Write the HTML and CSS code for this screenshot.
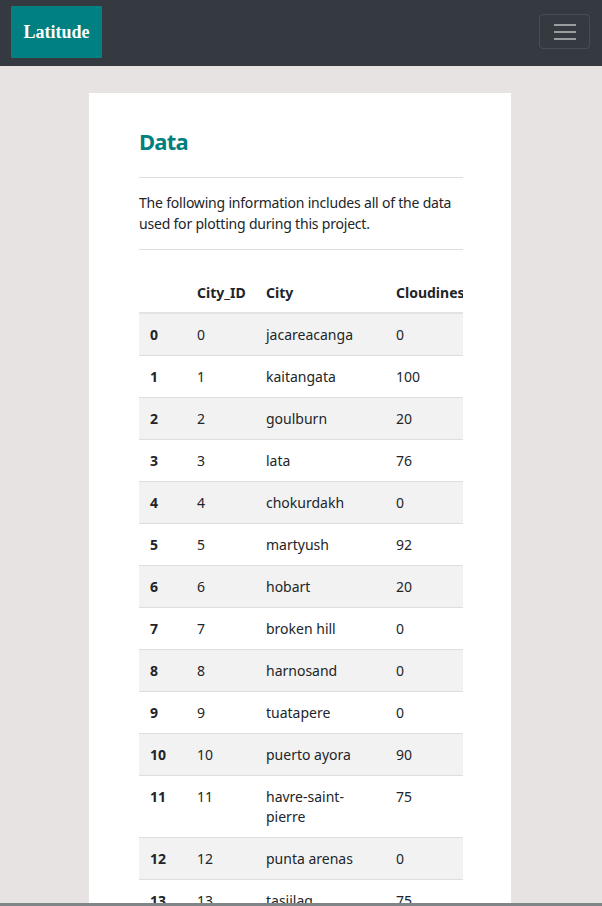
FILE: index.html
```html
<!DOCTYPE html>
<html>
<head>
<meta charset="utf-8">
<link rel="stylesheet" href="styles.css">
</head>
<body>
<nav class="navbar">
  <a class="brand" href="#">Latitude</a>
  <button class="toggler" type="button" aria-label="Toggle navigation">
    <span class="bar"></span><span class="bar"></span><span class="bar"></span>
  </button>
</nav>
<main class="main">
  <section class="card">
    <h1 class="title">Data</h1>
    <hr class="rule">
    <p class="lead">The following information includes all of the data used for plotting during this project.</p>
    <hr class="rule">
    <div class="table-wrap">
      <table class="data">
        <colgroup>
          <col class="c-idx"><col class="c-id"><col class="c-city"><col class="c-cloud"><col class="c-more"><col class="c-more"><col class="c-more">
        </colgroup>
        <thead>
          <tr><th></th><th>City_ID</th><th>City</th><th>Cloudiness</th><th>Country</th><th>Date</th><th>Humidity</th></tr>
        </thead>
        <tbody>
          <tr><th>0</th><td>0</td><td>jacareacanga</td><td>0</td><td>BR</td><td>1564184599</td><td>62</td></tr>
          <tr><th>1</th><td>1</td><td>kaitangata</td><td>100</td><td>NZ</td><td>1564184600</td><td>94</td></tr>
          <tr><th>2</th><td>2</td><td>goulburn</td><td>20</td><td>AU</td><td>1564184600</td><td>63</td></tr>
          <tr><th>3</th><td>3</td><td>lata</td><td>76</td><td>IN</td><td>1564184600</td><td>93</td></tr>
          <tr><th>4</th><td>4</td><td>chokurdakh</td><td>0</td><td>RU</td><td>1564184601</td><td>72</td></tr>
          <tr><th>5</th><td>5</td><td>martyush</td><td>92</td><td>RU</td><td>1564184601</td><td>81</td></tr>
          <tr><th>6</th><td>6</td><td>hobart</td><td>20</td><td>AU</td><td>1564184602</td><td>76</td></tr>
          <tr><th>7</th><td>7</td><td>broken hill</td><td>0</td><td>AU</td><td>1564184602</td><td>42</td></tr>
          <tr><th>8</th><td>8</td><td>harnosand</td><td>0</td><td>SE</td><td>1564184602</td><td>67</td></tr>
          <tr><th>9</th><td>9</td><td>tuatapere</td><td>0</td><td>NZ</td><td>1564184603</td><td>90</td></tr>
          <tr><th>10</th><td>10</td><td>puerto ayora</td><td>90</td><td>EC</td><td>1564184603</td><td>82</td></tr>
          <tr><th>11</th><td>11</td><td>havre-saint-pierre</td><td>75</td><td>CA</td><td>1564184604</td><td>71</td></tr>
          <tr><th>12</th><td>12</td><td>punta arenas</td><td>0</td><td>CL</td><td>1564184604</td><td>86</td></tr>
          <tr><th>13</th><td>13</td><td>tasiilaq</td><td>75</td><td>GL</td><td>1564184605</td><td>80</td></tr>
          <tr><th>14</th><td>14</td><td>rikitea</td><td>0</td><td>PF</td><td>1564184605</td><td>73</td></tr>
        </tbody>
      </table>
    </div>
  </section>
</main>
<div class="hscroll"></div>
</body>
</html>
```

FILE: styles.css
```css
* { box-sizing: border-box; }

html, body {
  margin: 0;
  padding: 0;
}

body {
  background: #e7e3e2;
  font-family: "Noto Sans", "Open Sans", sans-serif;
  font-size: 14px;
  line-height: 21px;
  color: #212529;
  height: 906px;
  overflow: hidden;
}

.navbar {
  display: flex;
  align-items: center;
  justify-content: space-between;
  height: 66px;
  padding: 0 12px 0 11px;
  background: #343a40;
}

.brand {
  display: flex;
  align-items: center;
  justify-content: center;
  width: 91px;
  height: 52px;
  margin-top: -2px;
  background: #008080;
  color: #fff;
  text-decoration: none;
  font-family: "Liberation Serif", "DejaVu Serif", serif;
  font-weight: bold;
  font-size: 18px;
}

.toggler {
  display: flex;
  flex-direction: column;
  align-items: center;
  justify-content: center;
  gap: 5px;
  width: 51px;
  height: 35px;
  margin-top: -3px;
  padding: 0;
  background: transparent;
  border: 1px solid rgba(255, 255, 255, 0.1);
  border-radius: 4px;
}

.bar {
  display: block;
  width: 22px;
  height: 2px;
  background: rgba(255, 255, 255, 0.5);
}

.main {
  padding-top: 27px;
  display: flex;
  justify-content: center;
}

.card {
  width: 422px;
  margin-left: -2px;
  background: #fff;
  padding: 34px 48px 0 50px;
  min-height: 900px;
}

.title {
  margin: 0;
  font-size: 22px;
  line-height: 28px;
  font-weight: bold;
  letter-spacing: -0.8px;
  color: #008080;
}

.rule {
  margin: 0;
  border: 0;
  border-top: 1px solid #dedede;
}

.title + .rule {
  margin-top: 22px;
}

.lead {
  margin: 14px 0 15px;
  line-height: 21px;
  letter-spacing: -0.2px;
}

.table-wrap {
  margin-top: 21px;
  width: 324px;
  overflow: hidden;
}

.data {
  border-collapse: collapse;
  table-layout: fixed;
  width: 650px;
}

.c-idx { width: 47px; }
.c-id { width: 69px; }
.c-city { width: 130px; }
.c-cloud { width: 110px; }
.c-more { width: 98px; }

.data th,
.data td {
  text-align: left;
  vertical-align: top;
  padding: 11px 11px 10px;
  line-height: 20px;
}

.data thead th {
  padding-top: 12px;
  padding-bottom: 9px;
  border-bottom: 2px solid #e3e3e3;
  font-weight: bold;
  white-space: nowrap;
}

.data tbody tr {
  border-top: 1px solid #dedede;
}

.data tbody tr:first-child {
  border-top: 0;
}

.data tbody tr:nth-child(odd) {
  background: #f2f2f2;
}

.data tbody th {
  font-weight: bold;
}

.hscroll {
  position: fixed;
  left: 0;
  right: 0;
  bottom: 0;
  height: 3px;
  background: #808588;
}
```
